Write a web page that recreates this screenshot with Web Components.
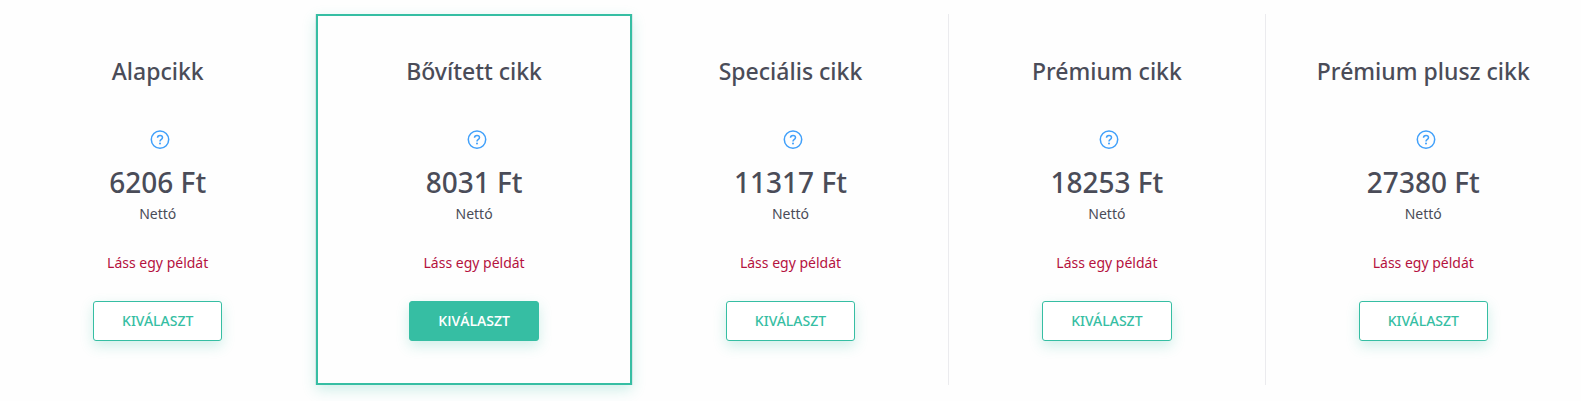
<!DOCTYPE html>
<html lang="hu">
<head>
<meta charset="utf-8">
<title>Cikk csomagok</title>
<style>
body { margin: 0; background: #fefefe; font-family: "Noto Sans", "Open Sans", sans-serif; color: #4a4c58; }
</style>
</head>
<body>
<pricing-table>
  <pricing-card name="Alapcikk" price="6206 Ft"></pricing-card>
  <pricing-card name="Bővített cikk" price="8031 Ft" featured></pricing-card>
  <pricing-card name="Speciális cikk" price="11317 Ft"></pricing-card>
  <pricing-card name="Prémium cikk" price="18253 Ft"></pricing-card>
  <pricing-card name="Prémium plusz cikk" price="27380 Ft"></pricing-card>
</pricing-table>

<template id="table-template">
  <style>
    :host { display: block; overflow: hidden; padding: 14px 0 16px; }
    .row { display: grid; grid-template-columns: repeat(5, 1fr); margin-right: -1px; }
  </style>
  <div class="row"><slot></slot></div>
</template>

<template id="card-template">
  <style>
    :host { display: block; border-right: 1px solid #ebebee; }
    :host([featured]) { position: relative; }
    :host(:last-of-type) { border-right-color: transparent; }
    article {
      box-sizing: border-box; height: 100%;
      display: flex; flex-direction: column; align-items: center;
      padding: 37px 0 42px; border: 2px solid transparent; text-align: center;
    }
    h2 { margin: 0; font-size: 23px; line-height: 36px; font-weight: 500; }
    help-icon { margin: 41px 0 0 5px; }
    .price { margin: 12px 0 0; font-size: 28px; line-height: 40px; font-weight: 500; }
    .net { margin: 0; font-size: 14px; line-height: 24px; }
    a { margin-top: 27px; font-size: 14px; line-height: 20px; color: #b5123e; text-decoration: none; }
    select-button { margin-top: 28px; }
    :host([featured]) article { border-color: #36bea3; box-shadow: 0 5px 13px rgba(54, 190, 163, 0.23); }
  </style>
  <article>
    <h2></h2>
    <help-icon></help-icon>
    <p class="price"></p>
    <p class="net">Nettó</p>
    <a href="#">Láss egy példát</a>
    <select-button>KIVÁLASZT</select-button>
  </article>
</template>

<template id="help-template">
  <style>
    :host { display: block; width: 20px; height: 20px; color: #41a0fa; }
    svg { display: block; }
  </style>
  <svg width="20" height="20" viewBox="0 0 20 20" fill="none" stroke="currentColor" aria-hidden="true">
    <circle cx="10" cy="9.6" r="8.7" stroke-width="1.5"/>
    <path d="M7.5 7.8C7.5 6.3 8.5 5.4 10 5.4s2.5.9 2.5 2.2c0 1.1-.7 1.6-1.4 2.1-.7.5-1.1.8-1.1 1.7" stroke-width="1.5"/>
    <circle cx="10" cy="13.5" r="1" fill="currentColor" stroke="none"/>
  </svg>
</template>

<template id="button-template">
  <style>
    :host { display: block; }
    button {
      display: block; box-sizing: border-box; height: 40px; padding: 0 28px;
      border: 1px solid #36bea3; border-radius: 3px; background: #fff; color: #36bea3;
      font-family: inherit; font-size: 14px; line-height: 20px; font-weight: 500;
      box-shadow: 0 5px 13px rgba(54, 190, 163, 0.23); cursor: pointer;
    }
    :host([primary]) button { background: #36bea3; color: #fff; font-family: "Open Sans", sans-serif; font-weight: 600; }
  </style>
  <button type="button"><slot></slot></button>
</template>

<script>
class TemplateElement extends HTMLElement {
  constructor() {
    super();
    const template = document.getElementById(this.constructor.template);
    this.attachShadow({ mode: "open" }).append(template.content.cloneNode(true));
  }
}
class SelectButton extends TemplateElement { static template = "button-template"; }
class HelpIcon extends TemplateElement { static template = "help-template"; }
class PricingTable extends TemplateElement { static template = "table-template"; }
class PricingCard extends TemplateElement {
  static template = "card-template";
  connectedCallback() {
    this.shadowRoot.querySelector("h2").textContent = this.getAttribute("name");
    this.shadowRoot.querySelector(".price").textContent = this.getAttribute("price");
    this.shadowRoot.querySelector("select-button").toggleAttribute("primary", this.hasAttribute("featured"));
  }
}
customElements.define("select-button", SelectButton);
customElements.define("help-icon", HelpIcon);
customElements.define("pricing-card", PricingCard);
customElements.define("pricing-table", PricingTable);
</script>
</body>
</html>
